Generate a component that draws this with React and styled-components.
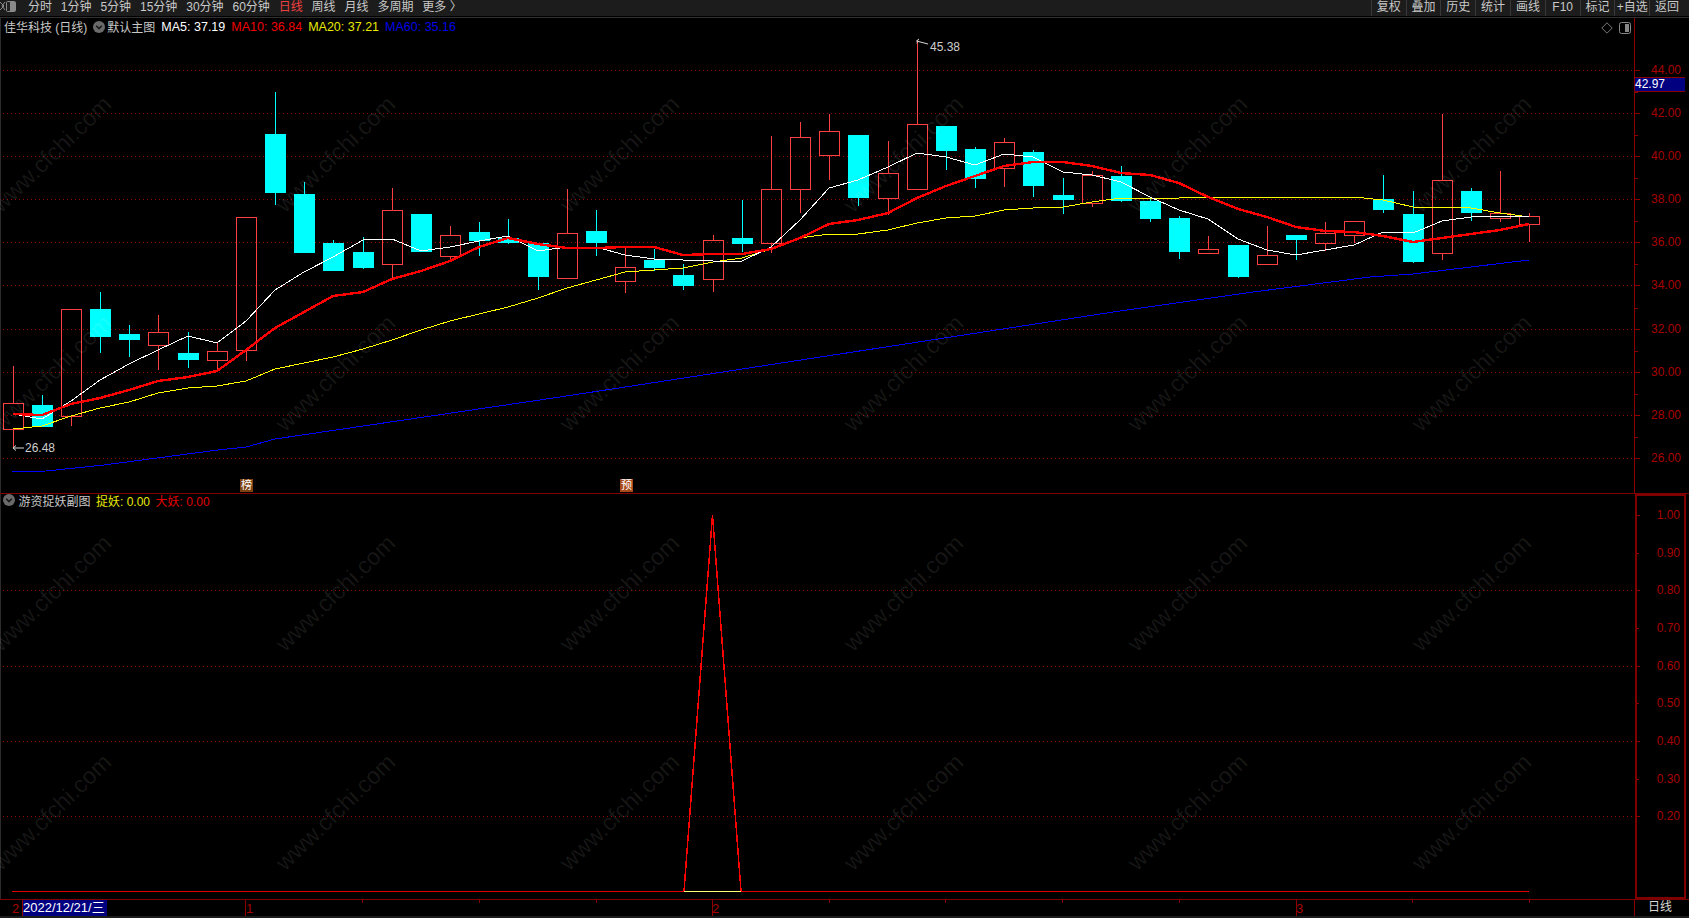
import React from "react";
import styled, { createGlobalStyle } from "styled-components";

const GlobalStyle = createGlobalStyle`
  html, body {
    margin: 0;
    padding: 0;
    background: #000;
    overflow: hidden;
  }
  * {
    box-sizing: border-box;
  }
`;

const FONT = `"Liberation Sans", "Noto Sans CJK SC", sans-serif`;
const PLOT_W = 1634;
const MAIN_TOP = 18;
const MAIN_H = 475;
const SUB_TOP = 494;
const SUB_H = 405;

const candleX = (i) => Math.round(12.5 + 29.17 * i);

// [high, body top, body bottom, low, rising], pixel rows of the chart
const candles = [
  [366, 403, 429, 448, 1], [395, 405, 427, 427, 0], [309, 309, 416, 426, 1], [292, 309, 337, 353, 0],
  [325, 334, 340, 357, 0], [315, 332, 345, 370, 1], [332, 353, 360, 368, 0], [342, 351, 360, 371, 1],
  [217, 217, 350, 361, 1], [92, 134, 193, 205, 0], [182, 194, 253, 253, 0], [240, 243, 271, 271, 0],
  [237, 252, 268, 269, 0], [188, 210, 264, 279, 1], [214, 214, 252, 252, 0], [226, 235, 256, 259, 1],
  [222, 232, 241, 256, 0], [219, 238, 243, 244, 0], [243, 243, 277, 290, 0], [189, 233, 278, 278, 1],
  [210, 231, 243, 256, 0], [247, 267, 281, 293, 1], [249, 260, 268, 271, 0], [264, 275, 286, 290, 0],
  [235, 240, 279, 292, 1], [200, 238, 244, 252, 0], [136, 189, 243, 253, 1], [122, 137, 189, 213, 1],
  [114, 131, 155, 180, 1], [135, 135, 198, 206, 0], [141, 173, 198, 215, 1], [40, 124, 189, 190, 1],
  [126, 126, 151, 170, 0], [147, 149, 179, 188, 0], [138, 142, 168, 187, 1], [150, 152, 186, 197, 0],
  [178, 195, 200, 214, 0], [171, 175, 203, 207, 1], [166, 176, 201, 202, 0], [197, 201, 219, 222, 0],
  [216, 218, 252, 259, 0], [236, 249, 253, 253, 1], [245, 245, 277, 278, 0], [226, 255, 264, 265, 1],
  [235, 235, 240, 260, 0], [222, 233, 243, 251, 1], [221, 221, 235, 243, 1], [175, 199, 210, 213, 0],
  [191, 214, 262, 263, 0], [114, 180, 253, 260, 1], [188, 191, 213, 221, 0], [171, 213, 218, 222, 1],
  [213, 216, 224, 242, 1],
];

const ma5 = [414, 419, 401, 380, 364, 350, 336, 343, 321, 290, 272, 257, 240, 239, 251, 247, 241, 236, 251, 247, 247, 255, 259, 260, 261, 261, 247, 220, 188, 180, 167, 153, 157, 165, 154, 157, 172, 175, 182, 197, 210, 219, 239, 250, 255, 250, 245, 232, 233, 221, 217, 216, 217];
const ma10 = [414, 415, 404, 398, 390, 381, 377, 371, 350, 328, 312, 296, 292, 279, 271, 261, 247, 238, 244, 248, 248, 247, 247, 255, 254, 254, 249, 238, 224, 220, 213, 198, 186, 176, 166, 162, 162, 166, 173, 175, 183, 197, 209, 217, 227, 231, 232, 236, 242, 238, 234, 230, 224];
const ma20 = [429, 426, 416, 408, 402, 393, 388, 386, 381, 369, 363, 357, 349, 340, 330, 321, 314, 307, 298, 288, 280, 272, 270, 268, 262, 258, 249, 238, 234, 234, 230, 223, 218, 216, 210, 208, 207, 202, 198, 198, 198, 197, 198, 197, 197, 197, 197, 200, 207, 207, 208, 213, 217];
const ma60 = [[12, 472], [46, 471], [104, 465], [157, 458], [218, 450], [246, 447], [275, 439], [560, 397], [1120, 311], [1253, 292], [1370, 277], [1413, 274], [1529, 260]];

const series = (values) => values.map((y, i) => `${candleX(i)},${y}`).join(" ");
const points = (pairs) => pairs.map(([x, y]) => `${x},${y}`).join(" ");

const mainGrid = [70, 113, 156, 199, 242, 285, 329, 372, 415, 458];
const mainLabels = ["44.00", "42.00", "40.00", "38.00", "36.00", "34.00", "32.00", "30.00", "28.00", "26.00"];
const subGrid = [590, 666, 741, 816];
const subLabels = ["1.00", "0.90", "0.80", "0.70", "0.60", "0.50", "0.40", "0.30", "0.20"];

const leftTabs = ["分时", "1分钟", "5分钟", "15分钟", "30分钟", "60分钟", "日线", "周线", "月线", "多周期", "更多 〉"];
const rightTabs = ["复权", "叠加", "历史", "统计", "画线", "F10", "标记", "+自选", "返回"];
const timeTicks = [362, 479, 596, 829, 945, 1062, 1179, 1412, 1529];
const timeMarks = [
  [22, "", 12],
  [245, "1", 246],
  [712, "2", 712],
  [1296, "3", 1296],
];

const Chevron = () => (
  <CircleIcon viewBox="0 0 12 12">
    <circle cx="6" cy="6" r="6" fill="#6a6a6a" />
    <path d="M3.2 4.8 L6 7.6 L8.8 4.8" fill="none" stroke="#1a1a1a" strokeWidth="1.6" />
  </CircleIcon>
);

const App = () => {
  return (
    <Page>
      <GlobalStyle />
      <Toolbar>
        <TabGroup>
          <LayoutIcon viewBox="0 0 18 14">
            <path d="M0 2 L4 6 L0 10 M5 2 L2 6 L5 10" fill="none" stroke="#8a8a8a" strokeWidth="1" />
            <rect x="6.5" y="1.5" width="9" height="10" rx="1" fill="#222" stroke="#8a8a8a" />
            <rect x="10" y="2" width="5" height="9" fill="#8a8a8a" />
          </LayoutIcon>
          {leftTabs.map((t) => (
            <Tab key={t} $active={t === "日线"}>{t}</Tab>
          ))}
        </TabGroup>
        <ActionGroup>
          {rightTabs.map((t) => (
            <ActionCell key={t}>{t}</ActionCell>
          ))}
        </ActionGroup>
      </Toolbar>
      <ToolbarRule />

      <PanelRow $height={MAIN_H}>
        <Plot>
          <svg width={PLOT_W} height={MAIN_H} viewBox={`0 ${MAIN_TOP} ${PLOT_W} ${MAIN_H}`} style={{ display: "block" }}>
            {mainGrid.map((y) => (
              <GridLine key={y} x1="3" x2={PLOT_W} y1={y + 0.5} y2={y + 0.5} />
            ))}
            {candles.map(([hi, top, bot, lo, up], i) => {
              const x = candleX(i);
              const color = up ? "#ff4040" : "#00ffff";
              return (
                <g key={i} shapeRendering="crispEdges">
                  <line x1={x + 0.5} x2={x + 0.5} y1={hi} y2={top} stroke={color} />
                  <line x1={x + 0.5} x2={x + 0.5} y1={bot} y2={lo} stroke={color} />
                  {up ? (
                    <rect x={x - 9.5} y={top + 0.5} width="20" height={bot - top} fill="none" stroke={color} />
                  ) : (
                    <rect x={x - 10} y={top} width="21" height={bot - top} fill={color} />
                  )}
                </g>
              );
            })}
            <polyline points={points(ma60)} fill="none" stroke="#0000ff" strokeWidth="1" shapeRendering="crispEdges" />
            <polyline points={series(ma20)} fill="none" stroke="#ffff00" strokeWidth="1" shapeRendering="crispEdges" />
            <polyline points={series(ma5)} fill="none" stroke="#ffffff" strokeWidth="1" shapeRendering="crispEdges" />
            <polyline points={series(ma10)} fill="none" stroke="#ff0000" strokeWidth="2.4" shapeRendering="crispEdges" />

            <path d="M919 41 L916.5 43 M916.5 41 L919 39 M916.5 41 L928 44" fill="none" stroke="#d8d8d8" />
            <PriceNote x="930" y="47">45.38</PriceNote>
            <path d="M24 448 L13 448 M13 448 L16 445.5 M13 448 L16 450.5" fill="none" stroke="#d8d8d8" />
            <PriceNote x="25" y="448">26.48</PriceNote>
          </svg>
          <Legend>
            <LegendName>佳华科技 (日线)</LegendName>
            <MainChevron><Chevron /></MainChevron>
            <LegendName>默认主图</LegendName>
            <LegendValue $color="#ffffff">MA5: 37.19</LegendValue>
            <LegendValue $color="#f00000">MA10: 36.84</LegendValue>
            <LegendValue $color="#e8e800">MA20: 37.21</LegendValue>
            <LegendValue $color="#0000e8">MA60: 35.16</LegendValue>
          </Legend>
          <CornerIcons>
            <svg width="12" height="12" viewBox="0 0 12 12">
              <path d="M6 .8 L11.2 6 L6 11.2 L.8 6 Z" fill="none" stroke="#777" />
            </svg>
            <svg width="12" height="12" viewBox="0 0 12 12">
              <rect x=".5" y=".5" width="11" height="11" rx="2" fill="#000" stroke="#888" />
              <rect x="6" y="2" width="4" height="8" fill="#888" />
            </svg>
          </CornerIcons>
          <EventTag $left={239} $bg="#7d4212">榜</EventTag>
          <EventTag $left={619} $bg="#a84a1a">预</EventTag>
        </Plot>
        <Axis>
          <svg width="54" height={MAIN_H} viewBox={`1635 ${MAIN_TOP} 54 ${MAIN_H}`} style={{ display: "block" }}>
            {mainGrid.map((y, i) => (
              <g key={y}>
                <TickLine x1="1635" x2="1640" y1={y + 0.5} y2={y + 0.5} />
                {i > 0 && <TickLine x1="1635" x2="1638" y1={y - 21} y2={y - 21} />}
                <AxisLabel x="1681" y={y}>{mainLabels[i]}</AxisLabel>
              </g>
            ))}
          </svg>
          <QuoteBadge>42.97</QuoteBadge>
        </Axis>
      </PanelRow>

      <Divider />

      <PanelRow $height={SUB_H}>
        <Plot>
          <svg width={PLOT_W} height={SUB_H} viewBox={`0 ${SUB_TOP} ${PLOT_W} ${SUB_H}`} style={{ display: "block" }}>
            {subGrid.map((y) => (
              <GridLine key={y} x1="3" x2={PLOT_W} y1={y + 0.5} y2={y + 0.5} />
            ))}
            <line x1="12" x2="1529" y1="891.5" y2="891.5" stroke="#e00000" strokeWidth="1" shapeRendering="crispEdges" />
            <polyline points="684,891 712.5,515 741,891" fill="none" stroke="#ff0000" strokeWidth="1.5" shapeRendering="crispEdges" />
            <line x1="684" x2="741" y1="891.5" y2="891.5" stroke="#ffff70" strokeWidth="1" shapeRendering="crispEdges" />
          </svg>
          <SubLegend>
            <SubChevron><Chevron /></SubChevron>
            <LegendName>游资捉妖副图</LegendName>
            <SubValue $color="#e8e800">捉妖: 0.00</SubValue>
            <SubValue $color="#e00000">大妖: 0.00</SubValue>
          </SubLegend>
        </Plot>
        <SubAxis>
          <svg width="47" height={SUB_H - 4} viewBox={`1637 ${SUB_TOP + 2} 47 ${SUB_H - 4}`} style={{ display: "block" }}>
            {subLabels.map((label, i) => {
              const y = Math.round(515 + i * 37.65);
              return (
                <g key={label}>
                  <TickLine x1="1637" x2={i % 2 ? "1638.5" : "1640"} y1={y + 0.5} y2={y + 0.5} />
                  <AxisLabel x="1680" y={y}>{label}</AxisLabel>
                </g>
              );
            })}
          </svg>
        </SubAxis>
      </PanelRow>

      <Divider />

      <TimeBar>
        <TimeTrack>
          <svg width={PLOT_W} height="16" style={{ display: "block" }}>
            {timeTicks.map((x) => (
              <TickLine key={x} x1={x + 0.5} x2={x + 0.5} y1="0" y2="3" />
            ))}
            {timeMarks.map(([x, label, textX]) => (
              <g key={x}>
                <TickLine x1={x + 0.5} x2={x + 0.5} y1="0" y2="16" />
                {label && <TimeLabel x={textX} y="8">{label}</TimeLabel>}
              </g>
            ))}
            <TimeLabel x="12" y="8">2</TimeLabel>
          </svg>
          <DateChip>2022/12/21/三</DateChip>
        </TimeTrack>
        <PeriodCell>日线</PeriodCell>
      </TimeBar>
      <StatusStrip />

      <WatermarkLayer>
        {Array.from({ length: 24 }, (_, i) => (
          <WatermarkCell key={i}>
            <Watermark>www.cfchi.com</Watermark>
          </WatermarkCell>
        ))}
      </WatermarkLayer>
    </Page>
  );
};

export default App;

const Page = styled.div`
  position: relative;
  width: 1689px;
  height: 918px;
  overflow: hidden;
  background: #000;
  font-family: ${FONT};
  font-size: 12px;
  color: #c8c8c8;
`;

const Toolbar = styled.div`
  display: flex;
  justify-content: space-between;
  height: 16px;
  background: #1c1c1c;
`;

const ToolbarRule = styled.div`
  height: 2px;
  background: #000;
  border-bottom: 1px solid #303030;
`;

const TabGroup = styled.div`
  display: flex;
  align-items: center;
  gap: 8.9px;
  height: 14px;
  line-height: 14px;
`;

const LayoutIcon = styled.svg`
  width: 18px;
  height: 14px;
  margin-right: 1px;
`;

const Tab = styled.span`
  color: ${(p) => (p.$active ? "#f04040" : "#c8c8c8")};
  white-space: nowrap;
`;

const ActionGroup = styled.div`
  display: flex;
  margin-right: 5px;
`;

const ActionCell = styled.div`
  width: 34.8px;
  height: 16px;
  line-height: 14px;
  text-align: center;
  border-left: 1px solid #383838;
  white-space: nowrap;
`;

const PanelRow = styled.div`
  display: flex;
  height: ${(p) => p.$height}px;
`;

const Plot = styled.div`
  position: relative;
  width: ${PLOT_W}px;
  border-left: 1px solid #2c2c2c;
  svg {
    margin-left: -1px;
  }
`;

const GridLine = styled.line`
  stroke: #8c0000;
  stroke-width: 1;
  stroke-dasharray: 1 3;
  shape-rendering: crispEdges;
`;

const PriceNote = styled.text`
  fill: #cfcfcf;
  font-size: 12px;
  dominant-baseline: central;
`;

const Legend = styled.div`
  position: absolute;
  top: 0;
  left: 3px;
  display: flex;
  align-items: center;
  gap: 6px;
  height: 17px;
`;

const SubLegend = styled(Legend)`
  left: 2px;
  height: 12px;
  gap: 5.5px;
`;

const MainChevron = styled.span`
  display: flex;
  margin-right: -4px;
  svg {
    margin-left: 0;
  }
`;

const SubChevron = styled.span`
  display: flex;
  margin-right: -2px;
  svg {
    margin-left: 0;
  }
`;

const CircleIcon = styled.svg`
  width: 12px;
  height: 12px;
  flex: none;
`;

const LegendName = styled.span`
  color: #c8c8c8;
  white-space: nowrap;
`;

const LegendValue = styled.span`
  color: ${(p) => p.$color};
  font-size: 12.5px;
  white-space: nowrap;
`;

const SubValue = styled(LegendValue)`
  font-size: 12px;
`;

const CornerIcons = styled.div`
  position: absolute;
  top: 4px;
  right: 3px;
  display: flex;
  gap: 7px;
`;

const EventTag = styled.div`
  position: absolute;
  bottom: 1px;
  left: ${(p) => p.$left}px;
  width: 13px;
  height: 13px;
  line-height: 13px;
  text-align: center;
  font-size: 11px;
  color: #fff;
  background: ${(p) => p.$bg};
`;

const Axis = styled.div`
  position: relative;
  flex: 1;
  border-left: 1px solid #8c0000;
`;

const TickLine = styled.line`
  stroke: #8c0000;
  stroke-width: 1;
  shape-rendering: crispEdges;
`;

const AxisLabel = styled.text`
  fill: #a80000;
  font-size: 12px;
  text-anchor: end;
  dominant-baseline: central;
`;

const QuoteBadge = styled.div`
  position: absolute;
  top: 59px;
  left: 0;
  width: 50px;
  height: 15px;
  line-height: 13px;
  color: #fff;
  background: #000080;
  border-top: 1px solid #8c0000;
  border-bottom: 1px solid #8c0000;
`;

const Divider = styled.div`
  height: 1px;
  background: #800000;
`;

const SubAxis = styled.div`
  flex: none;
  width: 51px;
  margin-left: 1px;
  border: 2px solid #800000;
`;

const TimeBar = styled.div`
  display: flex;
  height: 16px;
`;

const TimeTrack = styled.div`
  position: relative;
  width: ${PLOT_W}px;
`;

const TimeLabel = styled.text`
  fill: #a80000;
  font-size: 13px;
  dominant-baseline: central;
`;

const DateChip = styled.div`
  position: absolute;
  top: 0;
  left: 23px;
  width: 84px;
  height: 16px;
  line-height: 15px;
  font-size: 13px;
  color: #fff;
  white-space: nowrap;
  background: #000080;
`;

const PeriodCell = styled.div`
  flex: 1;
  padding-left: 13px;
  line-height: 15px;
  color: #d8d8d8;
  border-left: 1px solid #8c0000;
`;

const StatusStrip = styled.div`
  height: 2px;
  background: #1c1c1c;
`;

const WatermarkLayer = styled.div`
  position: absolute;
  top: 45px;
  left: -90px;
  display: grid;
  grid-template-columns: repeat(6, 284px);
  grid-template-rows: repeat(4, 219.3px);
  pointer-events: none;
`;

const WatermarkCell = styled.div`
  display: flex;
  align-items: center;
  justify-content: center;
`;

const Watermark = styled.span`
  font-size: 23.5px;
  color: rgba(255, 255, 255, 0.09);
  transform: rotate(-44deg);
  white-space: nowrap;
`;
